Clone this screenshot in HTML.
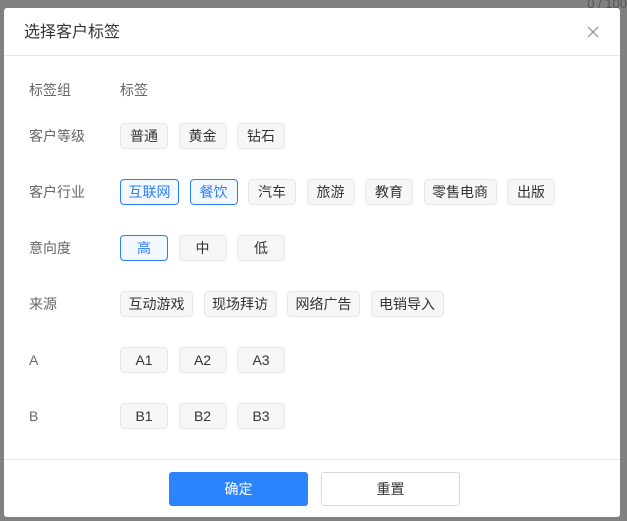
<!DOCTYPE html>
<html><head><meta charset="utf-8"><style>
body{margin:0;width:627px;height:521px;background:#808080;position:relative;overflow:hidden;font-family:"Liberation Sans","Noto Sans CJK SC",sans-serif;}
.bgt{position:absolute;right:0;top:-4px;color:#555;font-size:13px}
.dlg{position:absolute;left:4px;top:8px;width:616px;height:509px;background:#fff;border-radius:3px}
.title{position:absolute;left:20px;top:13px;font-size:16px;color:#333;line-height:24px}
.close{position:absolute;right:20px;top:17px;width:14px;height:14px}
.hl{position:absolute;left:0;right:0;top:47px;border-top:1px solid #e6e6e6}
.fl{position:absolute;left:0;right:0;top:451px;border-top:1px solid #e6e6e6}
.row{position:absolute;left:25px;height:25px;display:flex;align-items:center;font-size:14px}
.lab{width:91px;color:#666}
.tag{box-sizing:border-box;height:26px;min-width:48px;padding:0 7.5px;margin-right:10.5px;border:1px solid #e8e8e8;background:#f7f7f7;border-radius:4px;color:#333;display:flex;align-items:center;justify-content:center;font-size:14px}
.sel{border-color:#2c7ef8;color:#2c7ef8;background:#f3f8ff}
.btn{position:absolute;top:464px;height:34px;width:139px;box-sizing:border-box;border-radius:3px;display:flex;align-items:center;justify-content:center;font-size:14px}
</style></head><body>
<div class="bgt">0 / 100</div>
<div class="dlg">
<div class="title">选择客户标签</div>
<svg class="close" viewBox="0 0 14 14"><path d="M2 2L12 12M12 2L2 12" stroke="#888" stroke-width="1.2"/></svg>
<div class="hl"></div>
<div class="row" style="top:69px"><span class="lab">标签组</span><span style="color:#666">标签</span></div>
<div class="row" style="top:115px"><span class="lab">客户等级</span><span class="tag">普通</span><span class="tag">黄金</span><span class="tag">钻石</span></div>
<div class="row" style="top:171px"><span class="lab">客户行业</span><span class="tag sel">互联网</span><span class="tag sel">餐饮</span><span class="tag">汽车</span><span class="tag">旅游</span><span class="tag">教育</span><span class="tag">零售电商</span><span class="tag">出版</span></div>
<div class="row" style="top:227px"><span class="lab">意向度</span><span class="tag sel">高</span><span class="tag">中</span><span class="tag">低</span></div>
<div class="row" style="top:283px"><span class="lab">来源</span><span class="tag">互动游戏</span><span class="tag">现场拜访</span><span class="tag">网络广告</span><span class="tag">电销导入</span></div>
<div class="row" style="top:339px"><span class="lab">A</span><span class="tag">A1</span><span class="tag">A2</span><span class="tag">A3</span></div>
<div class="row" style="top:395px"><span class="lab">B</span><span class="tag">B1</span><span class="tag">B2</span><span class="tag">B3</span></div>
<div class="fl"></div>
<div class="btn" style="left:165px;background:#2c84fc;color:#fff">确定</div>
<div class="btn" style="left:317px;border:1px solid #d9d9d9;color:#333;background:#fff">重置</div>
</div>
</body></html>
